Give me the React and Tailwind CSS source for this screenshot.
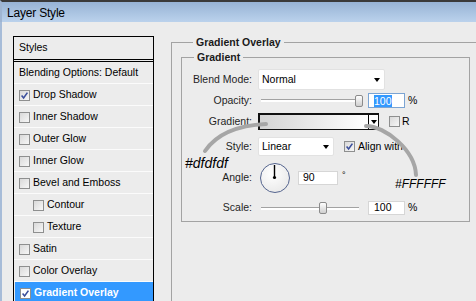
import React from "react";

const styles = [
  { label: "Drop Shadow", checked: true },
  { label: "Inner Shadow" },
  { label: "Outer Glow" },
  { label: "Inner Glow" },
  { label: "Bevel and Emboss" },
  { label: "Contour", indent: true },
  { label: "Texture", indent: true },
  { label: "Satin" },
  { label: "Color Overlay" },
  { label: "Gradient Overlay", checked: true, selected: true },
];

const CheckBox = ({ checked, light }) => (
  <span
    className={`flex h-[11px] w-[11px] shrink-0 items-center justify-center border border-[#8e8f8f] ${
      light ? "bg-white" : "bg-gradient-to-br from-[#d9d9d9] to-[#f7f7f7]"
    }`}
  >
    {checked && (
      <svg width="9" height="9" viewBox="0 0 9 9">
        <path d="M1.6 4.6 L3.6 7 L7.4 1.6" fill="none" stroke="#3b4f9c" strokeWidth="1.6" />
      </svg>
    )}
  </span>
);

const Arrow = () => (
  <span className="h-0 w-0 border-x-[3.5px] border-t-[4px] border-x-transparent border-t-black" />
);

// slider: thin track with the thumb sitting on top of it
const Slider = ({ width, thumb }) => (
  <div className={`relative flex h-[14px] items-center ${width}`}>
    <div className="h-[3px] w-full border-t border-[#a2a2a2] bg-white" />
    <div
      className={`absolute top-[1px] h-[12px] w-[8px] rounded-[2px] border border-[#8b8b8b] bg-gradient-to-b from-white to-[#cfcfcf] ${thumb}`}
    />
  </div>
);

const Label = ({ children }) => (
  <div className="w-[70px] shrink-0 text-right text-[#1f1f1f]">{children}</div>
);

export default function App() {
  return (
    <div className="relative h-[301px] w-[476px] overflow-hidden bg-[#ececec] font-['Liberation_Sans',Arial,sans-serif] text-[10.5px] text-black">
      {/* title bar */}
      <div className="flex h-[22px] items-center border-t-2 border-l-2 border-t-[#3a3a3a] border-l-[#9fb5d2] bg-gradient-to-b from-[#97b3d5] to-[#bbd2ec] pl-[5px] pt-[1px] text-[12px] tracking-[-0.2px]">
        Layer Style
      </div>

      <div className="flex h-[279px] items-start border-l-2 border-[#a7bcd8]">
        {/* styles list */}
        <div className="ml-[11px] mt-[14px] h-[266px] w-[141px] shrink-0 overflow-hidden border border-b-0 border-black">
          <div className="flex h-[22px] items-center pl-[5px]">Styles</div>
          <div className="h-[3px] border-y border-black" />
          <div className="flex h-[22px] items-center border-b border-[#fbfbfb] pl-[5px] pt-[1px]">
            Blending Options: Default
          </div>
          {styles.map((s) => (
            <div
              key={s.label}
              className={`flex h-[22px] items-center gap-[3px] border-b border-[#fbfbfb] pt-[1px] ${
                s.indent ? "pl-[19px]" : "pl-[5px]"
              } ${s.selected ? "ml-[1px] bg-[#3399ff] font-bold text-white" : ""}`}
            >
              <CheckBox checked={s.checked} light={s.selected} />
              <span>{s.label}</span>
            </div>
          ))}
        </div>

        {/* settings */}
        <fieldset className="ml-[17px] mt-[14px] h-[280px] w-[320px] shrink-0 border border-[#a3a3a3] pl-[9px]">
          <legend className="ml-[12px] px-[3px] font-bold leading-[12px] text-[#1a1a1a]">
            Gradient Overlay
          </legend>

          <fieldset className="mt-[3px] w-[289px] border border-[#a3a3a3] pb-[6px]">
            <legend className="ml-[12px] px-[3px] font-bold leading-[12px] text-[#1a1a1a]">
              Gradient
            </legend>

            <div className="mt-[6px] flex h-[21px] items-center">
              <Label>Blend Mode:</Label>
              <div className="ml-[6px] flex h-[21px] w-[127px] items-center justify-between rounded-[2px] border border-[#e2e2e2] bg-white pl-[3px] pr-[4px]">
                <span>Normal</span>
                <Arrow />
              </div>
            </div>

            <div className="mt-[3px] flex h-[15px] items-center">
              <Label>Opacity:</Label>
              <div className="ml-[9px]">
                <Slider width="w-[102px]" thumb="left-[94px]" />
              </div>
              <div className="ml-[5px] flex h-[15px] w-[37px] items-center border border-[#7ba4d3] bg-white pl-[5px]">
                <span className="bg-[#3399ff] leading-[12px] text-white">100</span>
              </div>
              <span className="ml-[3px]">%</span>
            </div>

            <div className="mt-[5px] flex h-[17px] items-center">
              <Label>Gradient:</Label>
              <div className="ml-[6px] flex h-[17px] w-[121px] border-2 border-r border-b border-[#111]">
                <div className="flex-1 bg-gradient-to-r from-[#d4d4d4] to-white" />
                <div className="flex w-[10px] items-center justify-center border-l border-black bg-white">
                  <Arrow />
                </div>
              </div>
              <div className="ml-[10px]">
                <CheckBox />
              </div>
              <span className="ml-[2px]">R</span>
            </div>

            <div className="mt-[7px] flex h-[19px] items-center">
              <Label>Style:</Label>
              <div className="ml-[6px] flex h-[19px] w-[76px] items-center justify-between rounded-[2px] border border-[#e2e2e2] bg-white pl-[3px] pr-[4px]">
                <span>Linear</span>
                <Arrow />
              </div>
              <div className="ml-[10px]">
                <CheckBox checked />
              </div>
              <span className="ml-[3px]">Align with</span>
            </div>

            <div className="mt-[7px] flex h-[30px] items-center">
              <Label>Angle:</Label>
              <div className="ml-[8px] h-[30px] w-[30px] rounded-full border-[1.5px] border-[#55658f] bg-[radial-gradient(circle_at_40%_35%,#ffffff,#e4e4e4)]">
                <svg width="27" height="27" viewBox="0 0 27 27">
                  <line x1="13.5" y1="13.5" x2="13.5" y2="1" stroke="#000" strokeWidth="1.4" />
                  <circle cx="13.5" cy="13.5" r="1.6" fill="#000" />
                </svg>
              </div>
              <div className="ml-[8px] flex h-[14px] w-[40px] items-center border border-[#d6d6d6] bg-white pl-[4px]">
                90
              </div>
              <span className="ml-[4px] self-start pt-[6px] text-[9px]">°</span>
            </div>

            <div className="mt-[8px] flex h-[14px] items-center">
              <Label>Scale:</Label>
              <div className="ml-[9px]">
                <Slider width="w-[98px]" thumb="left-[58px]" />
              </div>
              <div className="ml-[9px] flex h-[14px] w-[37px] items-center border border-[#d6d6d6] bg-white pl-[5px]">
                100
              </div>
              <span className="ml-[3px]">%</span>
            </div>
          </fieldset>
        </fieldset>
      </div>

      {/* colour annotations drawn over the dialog */}
      <svg className="pointer-events-none absolute left-0 top-0" width="476" height="301">
        <path d="M205 151 Q222 126 266 124" fill="none" stroke="#a6a6a6" strokeWidth="4" strokeLinecap="round" />
        <path d="M366 126 C385 126 415 150 416 175" fill="none" stroke="#a6a6a6" strokeWidth="4" strokeLinecap="round" />
      </svg>
      <span className="absolute left-[185px] top-[155px] text-[14px] italic leading-[16px]">#dfdfdf</span>
      <span className="absolute left-[395px] top-[177px] text-[12px] italic leading-[14px]">#FFFFFF</span>
    </div>
  );
}
